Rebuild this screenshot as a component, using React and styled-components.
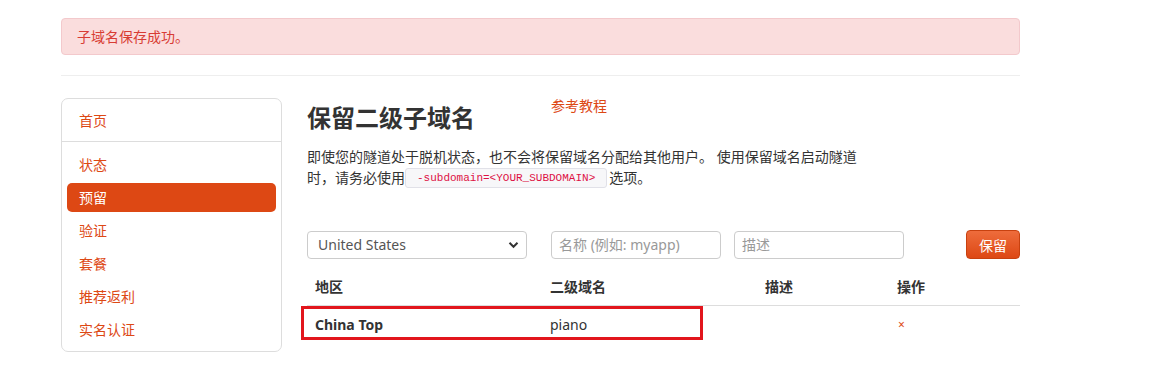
import React from "react";
import styled, { createGlobalStyle } from "styled-components";

const Global = createGlobalStyle`
  html, body { margin: 0; padding: 0; background: #fff; }
  body {
    font-family: "Noto Sans", "Noto Sans CJK SC", sans-serif;
    font-size: 14px;
    line-height: 20px;
    color: #333;
  }
  * { box-sizing: border-box; }
`;

const Page = styled.div`
  width: 959px;
  margin-left: 61px;
  padding-top: 18px;
`;

const Alert = styled.div`
  height: 37px;
  display: flex;
  align-items: center;
  padding: 0 15px;
  background: #fadddd;
  border: 1px solid #f3c9cc;
  border-radius: 4px;
  color: #d83c34;
  font-size: 14px;
`;

const Rule = styled.hr`
  margin: 20px 0 22px;
  border: 0;
  border-top: 1px solid #eee;
`;

const Row = styled.div`
  display: flex;
  align-items: flex-start;
  gap: 25px;
`;

const Sidebar = styled.nav`
  width: 221px;
  flex: none;
  border: 1px solid #ddd;
  border-radius: 7px;
  padding: 7px 5px 7px;
`;

const NavItem = styled.a`
  display: flex;
  align-items: center;
  height: 29px;
  padding-left: 12px;
  margin-bottom: ${(p) => (p.$last ? "0" : "4px")};
  border-radius: 5px;
  color: ${(p) => (p.$active ? "#fff" : "#dd4814")};
  background: ${(p) => (p.$active ? "#dd4814" : "transparent")};
  font-size: 14px;
  text-decoration: none;
`;

const NavDivider = styled.div`
  height: 1px;
  background: #ddd;
  margin: 6px -5px 8px;
`;

const Main = styled.main`
  flex: 1;
  min-width: 0;
`;

const Heading = styled.div`
  display: flex;
  align-items: flex-start;
`;

const Title = styled.h2`
  margin: 0;
  font-size: 24px;
  line-height: 40px;
  font-weight: 700;
  color: #333;
  width: 244px;
`;

const TutorialLink = styled.a`
  color: #dd4814;
  font-size: 14px;
  line-height: 20px;
  text-decoration: none;
  margin-top: -2px;
`;

const Lead = styled.p`
  margin: 8px 0 0;
  width: 556px;
  line-height: 21px;
  font-size: 14px;
`;

const Code = styled.code`
  display: inline-block;
  vertical-align: top;
  margin-top: 1px;
  height: 20px;
  line-height: 18px;
  font-family: "Liberation Mono", "DejaVu Sans Mono", monospace;
  font-size: 11px;
  color: #dd1144;
  background: #f7f7f9;
  border: 1px solid #e1e1e8;
  border-radius: 3px;
  padding: 0 11px;
  margin-right: 2px;
`;

const Form = styled.form`
  display: flex;
  align-items: center;
  margin-top: 42px;
  height: 29px;
`;

const SelectBox = styled.div`
  position: relative;
  width: 220px;
  height: 28px;
  border: 1px solid #ccc;
  border-radius: 4px;
  display: flex;
  align-items: center;
  padding-left: 10px;
  color: #555;
  font-size: 14px;
  margin-right: 24px;
`;

const Chevron = styled.svg`
  position: absolute;
  right: 7px;
  top: 9px;
`;

const Input = styled.input`
  width: 170px;
  height: 28px;
  border: 1px solid #ccc;
  border-radius: 4px;
  padding: 0 7px;
  font-family: inherit;
  font-size: 14px;
  color: #555;
  margin-right: ${(p) => p.$gap || "0"};
  &::placeholder { color: #999; }
`;

const Button = styled.button`
  margin-left: auto;
  height: 29px;
  width: 54px;
  border: 1px solid #c8410f;
  border-radius: 4px;
  background: linear-gradient(#ee6c3c, #dd4814);
  color: #fff;
  font-family: inherit;
  font-size: 14px;
  padding: 0;
`;

const TableWrap = styled.div`
  position: relative;
  margin-top: 10px;
`;

const Table = styled.table`
  width: 100%;
  border-collapse: collapse;
  table-layout: fixed;
`;

const Th = styled.th`
  text-align: left;
  font-weight: 700;
  padding: 8px;
  line-height: 20px;
  border-bottom: 1px solid #ddd;
`;

const Td = styled.td`
  padding: 8px;
  line-height: 20px;
  font-weight: ${(p) => (p.$bold ? 700 : 400)};
`;

const Remove = styled.a`
  color: #dd4814;
  font-size: 12px;
  text-decoration: none;
  padding-left: 1px;
`;

const Highlight = styled.div`
  position: absolute;
  left: -6px;
  top: 37px;
  width: 402px;
  height: 34px;
  border: 3px solid #e2161d;
  pointer-events: none;
`;

const navItems = ["状态", "预留", "验证", "套餐", "推荐返利", "实名认证"];

export default function App() {
  return (
    <>
      <Global />
      <Page>
        <Alert>子域名保存成功。</Alert>
        <Rule />
        <Row>
          <Sidebar>
            <NavItem $last>首页</NavItem>
            <NavDivider />
            {navItems.map((t, i) => (
              <NavItem key={t} $active={t === "预留"} $last={i === navItems.length - 1}>
                {t}
              </NavItem>
            ))}
          </Sidebar>
          <Main>
            <Heading>
              <Title>保留二级子域名</Title>
              <TutorialLink>参考教程</TutorialLink>
            </Heading>
            <Lead>
              即使您的隧道处于脱机状态，也不会将保留域名分配给其他用户。 使用保留域名启动隧道时，请务必使用
              <Code>-subdomain=&lt;YOUR_SUBDOMAIN&gt;</Code>选项。
            </Lead>
            <Form onSubmit={(e) => e.preventDefault()}>
              <SelectBox>
                United States
                <Chevron width="11" height="8" viewBox="0 0 11 8">
                  <path d="M1.5 1.8 L5.5 5.8 L9.5 1.8" fill="none" stroke="#333" strokeWidth="2" />
                </Chevron>
              </SelectBox>
              <Input placeholder="名称 (例如: myapp)" $gap="13px" />
              <Input placeholder="描述" />
              <Button type="submit">保留</Button>
            </Form>
            <TableWrap>
              <Table>
                <colgroup>
                  <col style={{ width: "235px" }} />
                  <col style={{ width: "215px" }} />
                  <col style={{ width: "132px" }} />
                  <col />
                </colgroup>
                <thead>
                  <tr>
                    <Th>地区</Th>
                    <Th>二级域名</Th>
                    <Th>描述</Th>
                    <Th>操作</Th>
                  </tr>
                </thead>
                <tbody>
                  <tr>
                    <Td $bold>China Top</Td>
                    <Td>piano</Td>
                    <Td></Td>
                    <Td><Remove>×</Remove></Td>
                  </tr>
                </tbody>
              </Table>
              <Highlight />
            </TableWrap>
          </Main>
        </Row>
      </Page>
    </>
  );
}
